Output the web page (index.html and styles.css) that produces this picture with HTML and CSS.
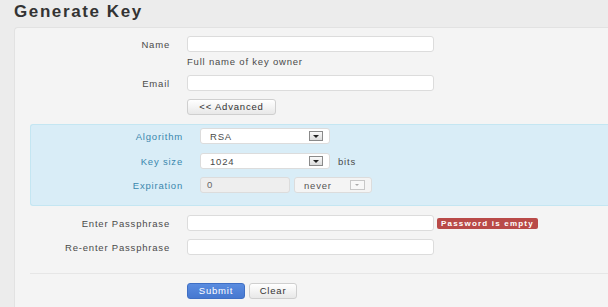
FILE: index.html
```html
<!DOCTYPE html>
<html lang="en">

<head>
    <meta charset="UTF-8">
    <meta name="viewport" content="width=device-width, initial-scale=1.0">
    <title>Generate Key</title>
    <link rel="stylesheet" href="styles.css">
</head>

<body>
    <h1 class="page-title">Generate Key</h1>
    <form class="key-form">
        <div class="form-row">
            <label class="row-label">Name</label>
            <div class="row-ctrl"><input class="text-input" type="text"></div>
        </div>
        <div class="help-text">Full name of key owner</div>
        <div class="form-row row-email">
            <label class="row-label">Email</label>
            <div class="row-ctrl"><input class="text-input" type="text"></div>
        </div>
        <div class="form-row row-adv">
            <span class="row-label"></span>
            <div class="row-ctrl"><button type="button" class="btn btn-adv">&lt;&lt; Advanced</button></div>
        </div>

        <!-- 高级选项 -->
        <div class="adv-box">
            <div class="form-row">
                <label class="row-label">Algorithm</label>
                <div class="row-ctrl">
                    <div class="fake-select sel-algo">RSA<span class="sel-arrow"></span></div>
                </div>
            </div>
            <div class="form-row">
                <label class="row-label">Key size</label>
                <div class="row-ctrl">
                    <div class="fake-select sel-algo">1024<span class="sel-arrow"></span></div>
                    <span class="unit">bits</span>
                </div>
            </div>
            <div class="form-row">
                <label class="row-label">Expiration</label>
                <div class="row-ctrl">
                    <div class="text-input exp-input">0</div>
                    <div class="fake-select sel-never">never<span class="sel-arrow off"></span></div>
                </div>
            </div>
        </div>

        <div class="form-row row-pass">
            <label class="row-label">Enter Passphrase</label>
            <div class="row-ctrl">
                <input class="text-input" type="password">
                <span class="badge-error">Password is empty</span>
            </div>
        </div>
        <div class="form-row row-pass2">
            <label class="row-label">Re-enter Passphrase</label>
            <div class="row-ctrl"><input class="text-input" type="password"></div>
        </div>

        <div class="form-actions">
            <button type="button" class="btn btn-submit">Submit</button>
            <button type="button" class="btn btn-clear">Clear</button>
        </div>
    </form>
</body>

</html>
```

FILE: styles.css
```css
html,
body {
    padding: 0;
    margin: 0;
}

body {
    background-color: #ececec;
    font-family: "Liberation Sans", Arial, sans-serif;
    font-size: 9.5px;
    letter-spacing: 0.8px;
    color: #4a4a4a;
    overflow: hidden;
}

.page-title {
    margin: 0 0 3px;
    padding: 0 14px;
    height: 24px;
    line-height: 24px;
    font-size: 17px;
    letter-spacing: 1.6px;
    color: #333;
}

.key-form {
    margin: 0 0 0 14px;
    padding: 8px 0 0;
    background-color: #f4f4f4;
    border: 1px solid #e2e2e2;
    border-right: 0;
    border-bottom: 0;
    border-radius: 4px 0 0 0;
    height: 280px;
    box-sizing: border-box;
}

.form-row {
    display: flex;
    align-items: center;
    height: 16px;
}

.row-label {
    width: 155px;
    text-align: right;
    flex-shrink: 0;
}

.row-ctrl {
    display: flex;
    align-items: center;
    margin-left: 17px;
}

.text-input {
    width: 247px;
    height: 16px;
    padding: 0 6px;
    margin: 0;
    border: 1px solid #dcdcdc;
    border-radius: 3px;
    background-color: #fff;
    box-sizing: border-box;
    font: inherit;
}

.help-text {
    margin: 4px 0 0 172px;
    height: 12px;
    line-height: 12px;
}

.row-email {
    margin-top: 7px;
}

.row-adv {
    margin-top: 8px;
}

.btn {
    height: 16px;
    padding: 0 10px;
    border: 1px solid #cfcfcf;
    border-radius: 3px;
    background: linear-gradient(#ffffff, #e8e8e8);
    font: inherit;
    letter-spacing: 0.8px;
    color: #333;
    line-height: 14px;
}

.btn-adv {
    width: 89px;
}

/* 高级选项 蓝色区域 */
.adv-box {
    margin: 9px 0 0 15px;
    padding: 3px 0 12px;
    background-color: #d9edf7;
    border: 1px solid #c4e6f2;
    border-right: 0;
    border-radius: 3px 0 0 3px;
    color: #3a87ad;
}

.adv-box .row-label {
    width: 152px;
}

.adv-box .form-row + .form-row {
    margin-top: 9px;
}

.adv-box .form-row:last-child {
    margin-top: 8px;
}

.adv-box .row-ctrl {
    color: #4a4a4a;
}

.fake-select {
    display: flex;
    align-items: center;
    justify-content: space-between;
    height: 16px;
    padding: 0 6px 0 9px;
    border: 1px solid #dcdcdc;
    border-radius: 3px;
    background-color: #fff;
    box-sizing: border-box;
}

.sel-algo {
    width: 130px;
}

.sel-never {
    width: 78px;
    margin-left: 4px;
    background-color: #f4f4f4;
    color: #555;
}

.sel-arrow {
    position: relative;
    width: 14px;
    height: 10px;
    border: 1px solid #8a8a8a;
    background: linear-gradient(#fafafa, #dcdcdc);
    box-sizing: border-box;
}

.sel-arrow::after {
    content: "";
    position: absolute;
    left: 3px;
    top: 3px;
    border: 3px solid transparent;
    border-top: 3px solid #222;
    border-bottom: 0;
}

.sel-arrow.off {
    width: 15px;
    border-color: #c8c8c8;
    background: #f8f8f8;
}

.sel-arrow.off::after {
    left: 4px;
    border-width: 2px;
    border-top-width: 2px;
    border-top-color: #aaa;
}

.unit {
    margin-left: 8px;
}

.exp-input {
    width: 90px;
    line-height: 14px;
    background-color: #eeeeee;
    color: #666;
}

.row-pass {
    margin-top: 9px;
}

.row-pass2 {
    margin-top: 8px;
}

.badge-error {
    margin-left: 3px;
    padding: 0 4px;
    height: 11px;
    line-height: 11px;
    border-radius: 2px;
    background-color: #b94a48;
    color: #fff;
    font-weight: bold;
    font-size: 8px;
    letter-spacing: 1.2px;
}

.form-actions {
    margin: 18px 0 0 15px;
    padding: 9px 0 0 157px;
    border-top: 1px solid #e6e6e6;
    display: flex;
}

.btn-submit {
    width: 58px;
    padding: 0;
    border-color: #3f6fc4;
    background: linear-gradient(#5a8ce0, #4778d0);
    color: #fff;
}

.btn-clear {
    width: 48px;
    margin-left: 4px;
    padding: 0;
}
```
